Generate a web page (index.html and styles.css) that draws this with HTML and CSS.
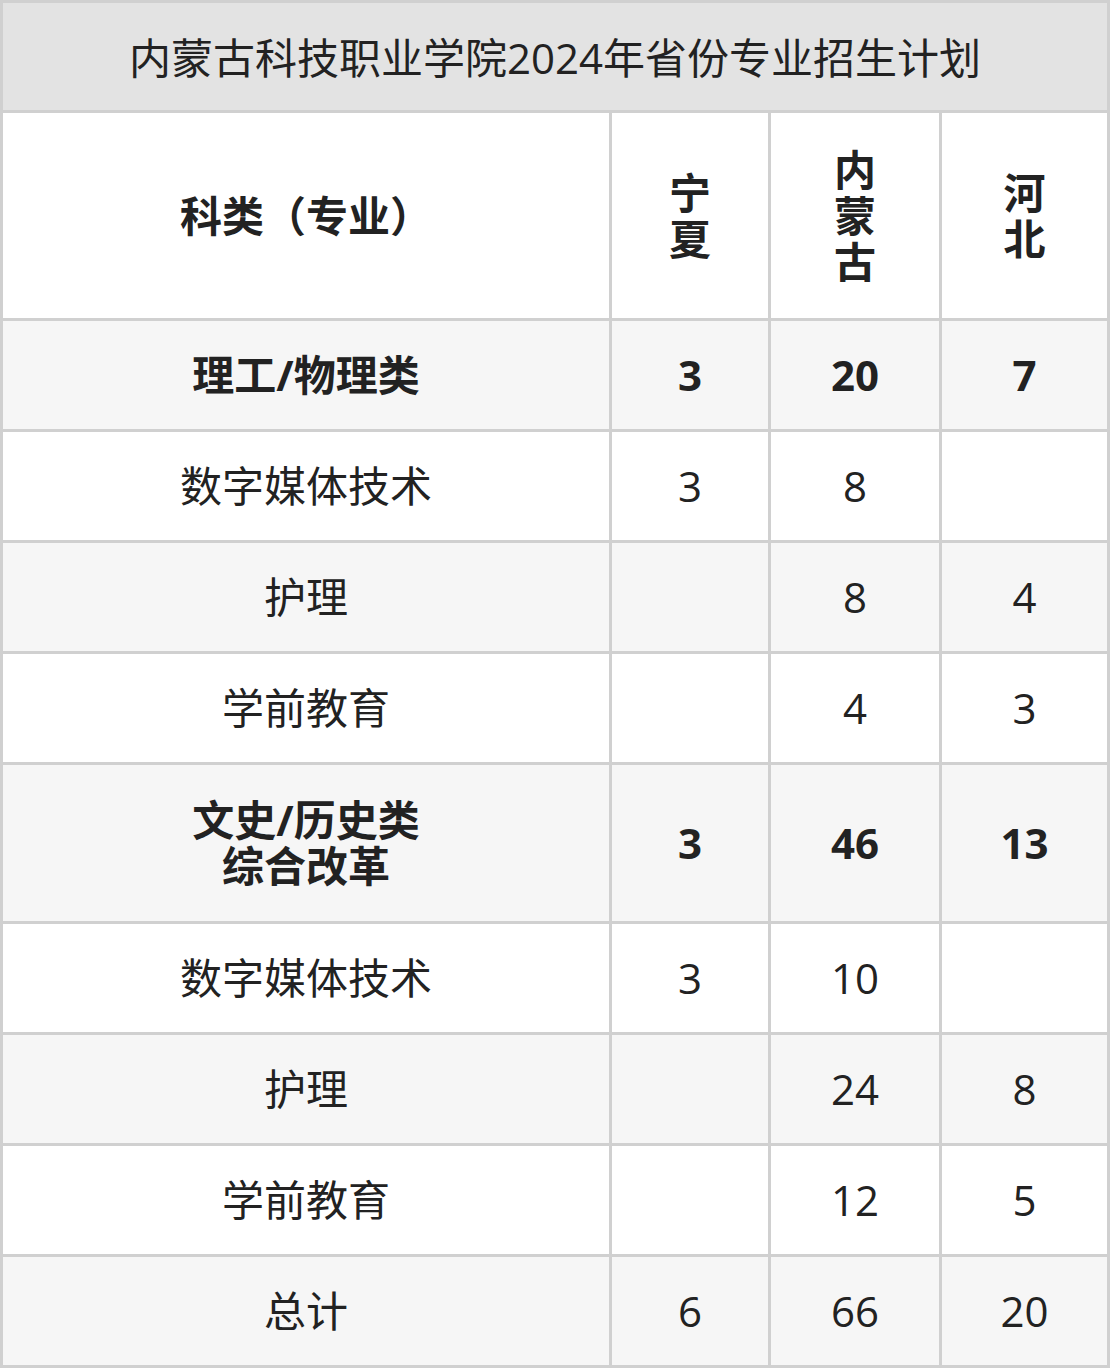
FILE: index.html
```html
<!DOCTYPE html>
<html lang="zh-CN">
<head>
<meta charset="utf-8">
<link rel="stylesheet" href="styles.css">
</head>
<body>
<table class="plan">
  <colgroup>
    <col class="c1"><col class="c2"><col class="c3"><col class="c4">
  </colgroup>
  <thead>
    <tr class="title-row"><th colspan="4" class="title">内蒙古科技职业学院2024年省份专业招生计划</th></tr>
    <tr class="head-row">
      <th>科类（专业）</th>
      <th>宁<br>夏</th>
      <th>内<br>蒙<br>古</th>
      <th>河<br>北</th>
    </tr>
  </thead>
  <tbody>
    <tr class="group"><td>理工/物理类</td><td>3</td><td>20</td><td>7</td></tr>
    <tr class="plain"><td>数字媒体技术</td><td>3</td><td>8</td><td></td></tr>
    <tr class="alt"><td>护理</td><td></td><td>8</td><td>4</td></tr>
    <tr class="plain"><td>学前教育</td><td></td><td>4</td><td>3</td></tr>
    <tr class="group tall"><td>文史/历史类<br>综合改革</td><td>3</td><td>46</td><td>13</td></tr>
    <tr class="plain"><td>数字媒体技术</td><td>3</td><td>10</td><td></td></tr>
    <tr class="alt"><td>护理</td><td></td><td>24</td><td>8</td></tr>
    <tr class="plain"><td>学前教育</td><td></td><td>12</td><td>5</td></tr>
    <tr class="alt"><td>总计</td><td>6</td><td>66</td><td>20</td></tr>
  </tbody>
</table>
</body>
</html>
```
FILE: styles.css
```css
html, body {
  margin: 0;
  padding: 0;
  background: #ffffff;
}
.plan {
  width: 1110px;
  table-layout: fixed;
  border-collapse: separate;
  border-spacing: 3px;
  background: #d0d0d0;
  font-family: "Open Sans", "Noto Sans CJK SC", sans-serif;
  font-size: 42px;
  line-height: 46px;
  color: #222222;
}
.c1 { width: 606px; }
.c2 { width: 156px; }
.c3 { width: 168px; }
.c4 { width: 165px; }
.plan th, .plan td {
  padding: 0;
  text-align: center;
  vertical-align: middle;
}
.plan th.title {
  height: 107px;
  background: #e3e3e3;
  font-weight: 400;
  padding-top: 2px;
  box-sizing: border-box;
}
.head-row th {
  height: 205px;
  background: #ffffff;
  font-weight: 700;
}
tbody tr td { height: 108px; }
tbody tr.tall td { height: 156px; }
.group td { background: #f6f6f6; font-weight: 700; }
.alt td { background: #f6f6f6; }
.plain td { background: #ffffff; }
```
